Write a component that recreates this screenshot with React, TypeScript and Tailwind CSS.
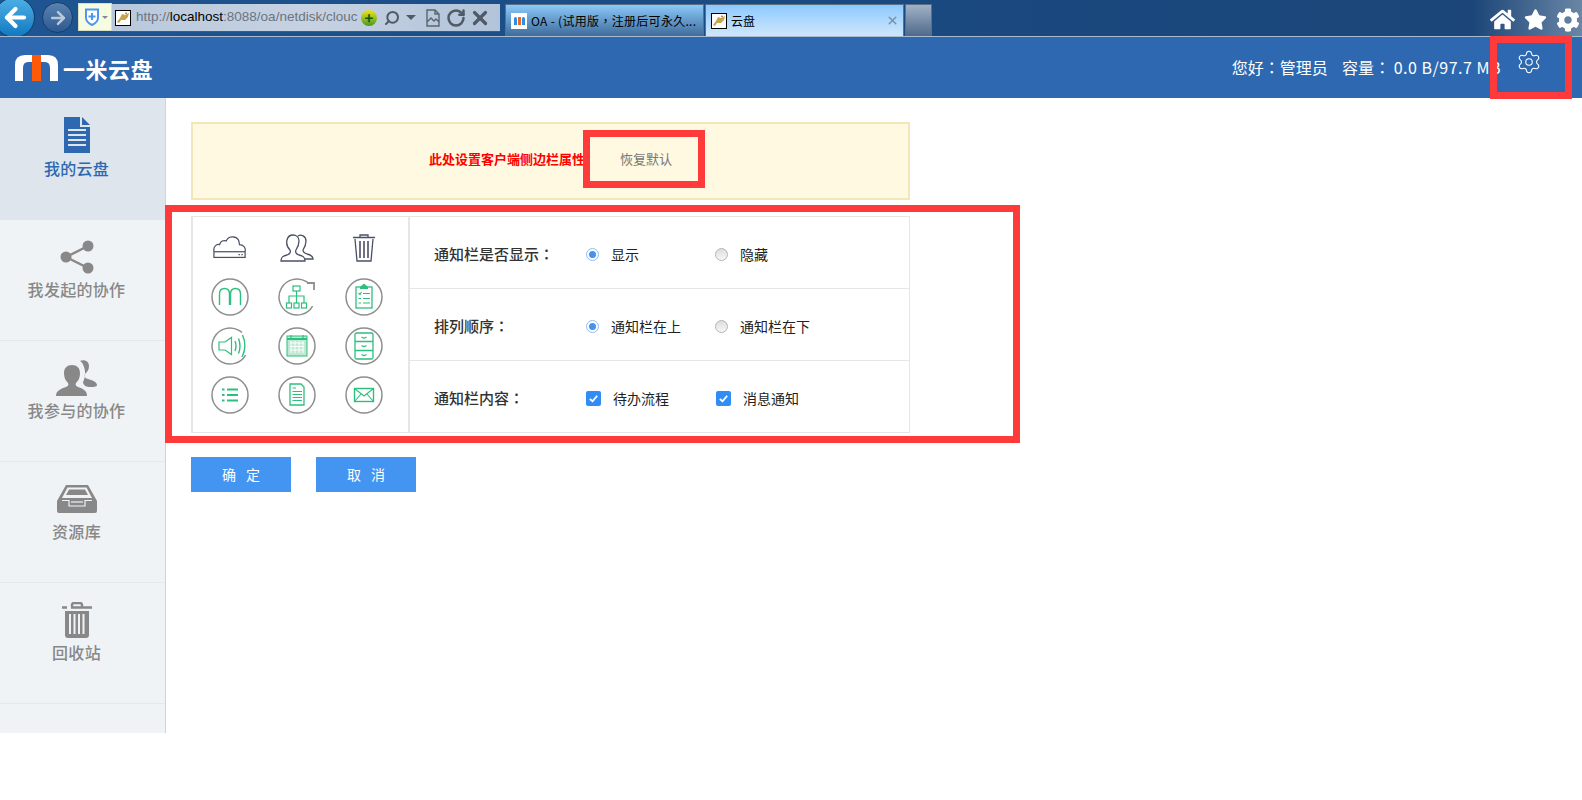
import { FaHome, FaStar, FaCog } from 'react-icons/fa';
import { Settings, Search, RotateCw, X, ArrowLeft, ArrowRight } from 'lucide-react';
import type { ReactNode } from 'react';

const TomcatIcon = () => (
  <span className="flex h-4 w-4 shrink-0 items-center justify-center border border-black bg-white">
    <svg viewBox="0 0 14 14" className="h-[14px] w-[14px]">
      <path d="M1 11 L4 7 L6 3 L9 4 L13 2 L12 6 L9 9 L5 9 L3 12 Z" fill="#c9a24e" />
      <path d="M9 3 L10 1 L11 3 Z" fill="#8a6b2a" />
    </svg>
  </span>
);

// full-width punctuation sits centred in the TC cut, as in the reference
const Colon = () => <span className="[font-family:'Noto_Sans_CJK_TC',sans-serif]">：</span>;
const Comma = () => <span className="[font-family:'Noto_Sans_CJK_TC',sans-serif]">，</span>;

const ChromeBar = () => (
  <div className="relative flex h-[37px] items-start overflow-hidden border-b border-[#a9bccf] bg-gradient-to-r from-[#1e5592] via-[#1a4a82] to-[#1b4577]">
    <div className="absolute right-0 top-0 h-[36px] w-[110px] bg-gradient-to-r from-transparent to-[#6a86a6]" />
    {/* back / forward */}
    <div className="ml-[-6px] mt-[-3px] flex h-[41px] w-[41px] shrink-0 items-center justify-center rounded-full border border-[#123a66] bg-gradient-to-b from-[#4cb0e6] to-[#0d78c0]">
      <ArrowLeft size={29} color="#ffffff" strokeWidth={3.5} className="ml-[2px]" />
    </div>
    <div className="ml-[7px] mt-[2px] flex h-[31px] w-[31px] shrink-0 items-center justify-center rounded-full border border-[#1a3e68] bg-gradient-to-b from-[#5a82ae] to-[#2c5a92]">
      <ArrowRight size={20} color="#b9c8da" strokeWidth={3} />
    </div>
    {/* address bar */}
    <div className="ml-[5px] mt-[3px] flex h-[28px] w-[34px] shrink-0 items-center gap-[1px] border border-[#d7dfc4] bg-[#f6fce2] pl-[5px]">
      <svg viewBox="0 0 16 18" className="h-[18px] w-[16px]">
        <path d="M2 1.5 H14 V10 C14 14 10 16 8 17 C6 16 2 14 2 10 Z" fill="#ffffff" stroke="#4d98ee" strokeWidth="2" />
        <path d="M8 5 V12 M4.5 8.5 H11.5" stroke="#4d98ee" strokeWidth="2" />
      </svg>
      <span className="ml-[1px] h-0 w-0 border-x-[3px] border-t-[3px] border-x-transparent border-t-[#888888]" />
    </div>
    <div className="mt-[4px] flex h-[28px] w-[388px] shrink-0 items-center border-b border-[#3c5d80] bg-gradient-to-r from-[#b8c8dc] via-[#c6d2e2] to-[#b2c4da] pl-[3px]">
      <TomcatIcon />
      <span className="ml-[5px] w-[221px] whitespace-nowrap text-[13.5px] text-[#6c7480] [font-family:'Liberation_Sans',sans-serif]">
        http://<span className="text-black">localhost</span>:8088/oa/netdisk/clouc
      </span>
      <span className="ml-[4px] flex h-4 w-4 shrink-0 items-center justify-center rounded-full bg-gradient-to-b from-[#f2e21c] to-[#3f9a1c] text-[15px] font-bold leading-none text-[#0c5a10]">+</span>
      <Search size={16} color="#505a66" strokeWidth={3} className="ml-[7px] -scale-x-100" />
      <span className="ml-[6px] h-0 w-0 border-x-[5px] border-t-[5px] border-x-transparent border-t-[#505a66]" />
      <svg viewBox="0 0 14 18" className="ml-[10px] h-[18px] w-[14px]" fill="none" stroke="#5a646f" strokeWidth="1.4">
        <path d="M1 1 H9 L13 5 V17 H1 Z M9 1 V5 H13 M1 13 L5 9 L8 12 L10 10 L13 13" />
      </svg>
      <RotateCw size={20} color="#505a66" strokeWidth={3} className="ml-[6px]" />
      <X size={22} color="#505a66" strokeWidth={3.5} className="ml-[3px]" />
    </div>
    {/* tabs */}
    <div className="ml-[5px] mt-[4px] flex h-[32px] w-[199px] shrink-0 items-center border border-b-0 border-[#5a7088] bg-gradient-to-b from-[#8ccaf9] to-[#3f6c9c] pl-[5px]">
      <span className="flex h-4 w-4 shrink-0 items-center justify-center gap-[1px] bg-white">
        <span className="h-[8px] w-[3px] rounded-t-sm bg-[#2b8fe6]" />
        <span className="h-[8px] w-[3px] bg-[#f26522]" />
        <span className="h-[8px] w-[3px] rounded-t-sm bg-[#2b8fe6]" />
      </span>
      <span className="ml-[4px] whitespace-pre text-[12px] leading-none tracking-[0.3px] text-black">
        OA - (试用版<Comma />注册后可永久...
      </span>
    </div>
    <div className="ml-[1px] mt-[4px] flex h-[32px] w-[199px] shrink-0 items-center border border-b-0 border-[#5a7088] bg-gradient-to-b from-[#8cc9fe] to-[#d0e6fb] pl-[5px]">
      <TomcatIcon />
      <span className="ml-[4px] text-[12px] leading-none text-black">云盘</span>
      <X size={13} color="#7f93a8" strokeWidth={3} className="ml-auto mr-[4px]" />
    </div>
    <div className="ml-[1px] mt-[4px] h-[32px] w-[27px] shrink-0 border border-b-0 border-[#5a7088] bg-gradient-to-b from-[#a2b2c6] to-[#4f6a8a]" />
    {/* right side */}
    <div className="relative ml-auto mr-[2px] mt-[7px] flex items-center gap-[9px]">
      <FaHome size={25} color="#ffffff" />
      <FaStar size={23} color="#ffffff" />
      <FaCog size={24} color="#ffffff" />
    </div>
  </div>
);

const TopHeader = () => (
  <header className="flex h-[61px] items-center bg-[#2d68b0] text-white">
    <div className="ml-[15px] flex items-center">
      <svg viewBox="0 0 43 26" className="h-[26px] w-[43px]">
        <path d="M0 26 V10 Q0 0 10 0 H17 V7 H13 Q8 7 8 13 V26 Z" fill="#ffffff" />
        <rect x="17" y="0" width="9" height="26" fill="#ff5a0a" />
        <path d="M26 0 H33 Q43 0 43 10 V26 H35 V13 Q35 7 30 7 H26 Z" fill="#ffffff" />
      </svg>
      <span className="ml-[5px] text-[22px] font-bold leading-none tracking-[0.5px]">一米云盘</span>
    </div>
    <div className="ml-auto mr-[81px] mt-[-1px] whitespace-pre text-[16px]">
      您好<Colon />管理员{'    '}容量<Colon /> <span className="tracking-[0.5px]">0.0 B/97.7 MB</span>
    </div>
  </header>
);

const DocIcon = () => (
  <svg viewBox="0 0 26 36" className="h-[36px] w-[26px]">
    <path d="M0 0 H16 V10 H26 V36 H0 Z" fill="#2d68b0" />
    <path d="M18 0 L26 8 H18 Z" fill="#2d68b0" />
    <path d="M4 13 H22 M4 18 H22 M4 23 H22 M4 28 H22" stroke="#dee5ed" strokeWidth="2" />
  </svg>
);
const ShareIcon = () => (
  <svg viewBox="0 0 34 34" className="h-[34px] w-[34px]">
    <path d="M6 17 L28 6 M6 17 L28 28" stroke="#888888" strokeWidth="2.5" />
    <circle cx="6" cy="17" r="5.5" fill="#888888" />
    <circle cx="28" cy="6" r="5.5" fill="#888888" />
    <circle cx="28" cy="28" r="5.5" fill="#888888" />
  </svg>
);
const UsersIcon = () => (
  <svg viewBox="0 0 42 36" className="h-[36px] w-[42px]">
    <path d="M0 36 C0 31 4 29 10 27 C12 26 13 25 12 23 C9 20 8 17 8 13 C8 8 11 5 16 5 C21 5 24 8 24 13 C24 17 23 20 20 23 C19 25 20 26 22 27 C28 29 31 31 31 36 Z" fill="#888888" />
    <path d="M24 1 C28 -1 33 1 33 6 C33 10 31 12 29 14 C28 17 29 18 32 19 C36 20 41 22 41 25 C41 27 37 27 33 27 C29 27 27 24 27 22 C29 19 30 12 28 7 C27 4 26 2 24 1 Z" fill="#888888" />
  </svg>
);
const InboxIcon = () => (
  <svg viewBox="0 0 40 28" className="h-[28px] w-[40px]">
    <path d="M9 0 H31 L40 16 V26 Q40 28 38 28 H2 Q0 28 0 26 V16 Z" fill="#888888" />
    <path d="M10.5 2.5 H29.5 L35 13 H5 Z" fill="#eff3f6" />
    <path d="M12 4.5 H28 L31 10 H9 Z" fill="#888888" />
    <path d="M5 15.5 H12 V21 H28 V15.5 H35" stroke="#eff3f6" strokeWidth="1.2" fill="none" />
    <path d="M14 17 H26" stroke="#eff3f6" strokeWidth="1.2" />
  </svg>
);
const TrashIcon = () => (
  <svg viewBox="0 0 30 36" className="h-[36px] w-[30px]">
    <path d="M0 5.5 H5 M9 5.5 H30" stroke="#888888" strokeWidth="2.5" />
    <path d="M10 5 V3 Q10 1 12 1 H18 Q20 1 20 3 V5" stroke="#888888" strokeWidth="2.4" fill="none" />
    <path d="M3 9 H27 V33 Q27 36 24 36 H6 Q3 36 3 33 Z" fill="#888888" />
    <path d="M7 12 V32 M11.5 12 V32 M16 12 V32 M20.5 12 V32" stroke="#eff3f6" strokeWidth="2" transform="translate(1 0)" />
  </svg>
);

const NavItem = ({ icon, label, active }: { icon: ReactNode; label: string; active?: boolean }) => (
  <div className={active ? 'flex h-[122px] flex-col items-center bg-[#dee5ed] pr-[12px] pt-[19px]' : 'flex h-[121px] flex-col items-center border-b border-[#e3e9ef] pr-[12px] pt-[19px]'}>
    <div className="flex h-[36px] items-center justify-center">{icon}</div>
    <div className={active ? 'mt-[3px] text-[16px] font-medium leading-[24px] tracking-[0.3px] text-[#2d68b0]' : 'mt-[2px] text-[16px] font-medium leading-[24px] tracking-[0.3px] text-[#888888]'}>
      {label}
    </div>
  </div>
);

const Sidebar = () => (
  <aside className="h-[635px] w-[166px] shrink-0 border-r border-[#c8d5e2] bg-[#eff3f6]">
    <NavItem active icon={<DocIcon />} label="我的云盘" />
    <NavItem icon={<ShareIcon />} label="我发起的协作" />
    <NavItem icon={<UsersIcon />} label="我参与的协作" />
    <NavItem icon={<InboxIcon />} label="资源库" />
    <NavItem icon={<TrashIcon />} label="回收站" />
  </aside>
);

const Ring = ({ children, gap }: { children: ReactNode; gap?: boolean }) => (
  <svg viewBox="0 0 40 40" className="h-[40px] w-[40px]" fill="none">
    <circle
      cx="20"
      cy="20"
      r="18"
      stroke="#8e8e8e"
      strokeWidth="1.5"
      strokeDasharray={gap ? '88 25' : undefined}
      transform={gap ? 'rotate(30 20 20)' : undefined}
    />
    {children}
  </svg>
);

const green = '#2dbf7d';

const sideIcons: ReactNode[] = [
  <svg key="cloud" viewBox="0 0 36 28" className="h-[27px] w-[34px]" fill="none" stroke="#4b5064" strokeWidth="1.3">
    <path d="M1 18 C0 13 4 10 7 11 C8 7 11 6 14 7 C16 2 24 1 27 6 C28 9 28 10 28 11 C32 11 35 14 34 18" />
    <rect x="1" y="18.5" width="33" height="6" />
    <path d="M27 21.5 H28.5 M30 21.5 H31.5" />
  </svg>,
  <svg key="users" viewBox="0 0 34 28" className="h-[28px] w-[34px]" fill="none" stroke="#4b5064" strokeWidth="1.3">
    <path d="M1 27 C1 23 3 22 7 21 C10 20 11 18 10 16 C7 13 6 10 7 6 C8 2 11 1 13 1 C16 1 19 3 19 7 C19 10 18 13 16 16 C15 18 16 20 19 21 C23 22 25 23 25 27 Z" />
    <path d="M18 2 C21 0 26 2 26 7 C26 10 25 13 23 16 C23 18 24 19 27 20 C31 21 33 22 33 25 H25" />
  </svg>,
  <svg key="trash" viewBox="0 0 24 28" className="h-[28px] w-[24px]" fill="none" stroke="#4b5064" strokeWidth="1.3">
    <path d="M1 3.5 H23 M8 3 V1 H16 V3 M3 5 L5 27 H19 L21 5" />
    <path d="M8 7 V24 M12 7 V24 M16 7 V24" strokeWidth="1.6" />
  </svg>,
  <Ring key="m">
    <path d="M9.5 28 V17 Q9.5 11.5 14.5 11.5 Q19.5 11.5 19.5 17 V28 M20.5 28 V17 Q20.5 11.5 25.5 11.5 Q30.5 11.5 30.5 17 V28" stroke={green} strokeWidth="1.4" />
  </Ring>,
  <Ring key="org" gap>
    <path d="M30 6 H37 V13" stroke="#8e8e8e" strokeWidth="1.8" />
    <rect x="16" y="9" width="7" height="5" stroke={green} strokeWidth="1.2" />
    <path d="M19.5 14 V22 M12 26 V19 H27 V26 M19.5 22 V26" stroke={green} strokeWidth="1.2" />
    <rect x="9.5" y="26" width="5" height="5" stroke={green} strokeWidth="1.2" />
    <rect x="17" y="26" width="5" height="5" stroke={green} strokeWidth="1.2" />
    <rect x="24.5" y="26" width="5" height="5" stroke={green} strokeWidth="1.2" />
  </Ring>,
  <Ring key="task">
    <rect x="12" y="10" width="16" height="21" stroke={green} strokeWidth="1.3" />
    <path d="M16 10 L20 6.5 L24 10 V12 H16 Z" fill={green} />
    <path d="M14.5 16 L16 17.5 L17.5 15 M14.5 21.5 H17 M14.5 26 H17 M19 16.5 H26 M19 21.5 H26 M19 26 H26" stroke={green} strokeWidth="1.1" />
  </Ring>,
  <Ring key="sound" gap>
    <path d="M9 16 H15 L21.5 11.5 V28.5 L15 24 H9 Z" stroke={green} strokeWidth="1.2" />
    <path d="M25 15 Q27 20 25 25 M28.5 12.5 Q31.5 20 28.5 27.5 M32.5 9 Q37.5 20 32 31" stroke={green} strokeWidth="1.4" />
  </Ring>,
  <Ring key="cal">
    <rect x="10" y="10" width="20" height="20" fill="#bfe9d4" stroke={green} strokeWidth="1" />
    <path d="M10 13 H30" stroke={green} strokeWidth="2" />
    <path d="M14 9 V12 M26 9 V12" stroke={green} strokeWidth="1.2" />
    <path d="M13 17 H27 M13 20.5 H27 M13 24 H27 M14 15 V27 M18 15 V27 M22 15 V27 M26 15 V27" stroke="#ffffff" strokeWidth="0.9" />
  </Ring>,
  <Ring key="cabinet">
    <rect x="11" y="7" width="18" height="26" rx="1.5" stroke={green} strokeWidth="1.3" />
    <path d="M11 15.5 H29 M11 24.5 H29" stroke={green} strokeWidth="1.3" />
    <path d="M17.5 11 Q20 13 22.5 11 M17.5 19.5 Q20 21.5 22.5 19.5 M17.5 28.5 Q20 30.5 22.5 28.5" stroke={green} strokeWidth="1.3" />
  </Ring>,
  <Ring key="list">
    <path d="M12 14.5 H14.5 M12 20 H14.5 M12 25.5 H14.5 M17 14.5 H28 M17 20 H28 M17 25.5 H28" stroke={green} strokeWidth="2.2" />
  </Ring>,
  <Ring key="doc">
    <path d="M13 9 H24 L27 12 V30 H13 Z" stroke={green} strokeWidth="1.3" />
    <path d="M15.5 13 H19 M15.5 16.5 H25 M15.5 19.5 H25 M15.5 22.5 H25 M15.5 25.5 H25" stroke={green} strokeWidth="1.1" />
  </Ring>,
  <Ring key="mail">
    <rect x="10.5" y="13.5" width="19" height="13" stroke={green} strokeWidth="1.4" />
    <path d="M10.5 13.5 L20 21 L29.5 13.5 M10.5 26.5 L17 19 M29.5 26.5 L23 19" stroke={green} strokeWidth="1.1" />
  </Ring>,
];

const Radio = ({ checked }: { checked?: boolean }) =>
  checked ? (
    <span className="flex h-[13px] w-[13px] shrink-0 items-center justify-center rounded-full border border-[#8fbdf5] bg-white">
      <span className="h-[7px] w-[7px] rounded-full bg-[#4593f0]" />
    </span>
  ) : (
    <span className="h-[13px] w-[13px] shrink-0 rounded-full border border-[#b5b5b5] bg-gradient-to-b from-[#dddddd] to-[#f7f7f7]" />
  );

const Check = () => (
  <span className="flex h-[15px] w-[15px] shrink-0 items-center justify-center rounded-[2px] bg-[#2f8df5]">
    <svg viewBox="0 0 12 12" className="h-[11px] w-[11px]" fill="none" stroke="#ffffff" strokeWidth="2">
      <path d="M2 6.5 L5 9 L10 3" />
    </svg>
  </span>
);

const Option = ({ mark, label, width, gap }: { mark: ReactNode; label: string; width: string; gap: string }) => (
  <div className={`flex items-center ${width} ${gap}`}>
    {mark}
    <span className="text-[14px] text-[#222222]">{label}</span>
  </div>
);

const FormRow = ({ label, children, last }: { label: string; children: ReactNode; last?: boolean }) => (
  <div className={last ? 'flex h-[71px] items-center pt-[3px]' : 'flex h-[72px] items-center border-b border-[#e6e6e6] pt-[3px]'}>
    <div className="w-[176px] shrink-0 pl-[24px] text-[15px] font-medium text-[#333333]">
      {label}
      <Colon />
    </div>
    <div className="flex items-center">{children}</div>
  </div>
);

const SettingsPanel = () => (
  <div className="flex h-[217px] w-[719px] border border-l-2 border-[#e6e6e6]">
    <div className="grid w-[217px] shrink-0 grid-cols-[repeat(3,67px)] auto-rows-[49px] place-items-center border-r-2 border-[#e6e6e6] pl-[3px] pt-[6px]">
      {sideIcons}
    </div>
    <div className="flex-1">
      <FormRow label="通知栏是否显示">
        <Option mark={<Radio checked />} label="显示" width="w-[129px]" gap="gap-[12px]" />
        <Option mark={<Radio />} label="隐藏" width="w-[129px]" gap="gap-[12px]" />
      </FormRow>
      <FormRow label="排列顺序">
        <Option mark={<Radio checked />} label="通知栏在上" width="w-[129px]" gap="gap-[12px]" />
        <Option mark={<Radio />} label="通知栏在下" width="w-[129px]" gap="gap-[12px]" />
      </FormRow>
      <FormRow label="通知栏内容" last>
        <Option mark={<Check />} label="待办流程" width="w-[130px]" gap="gap-[12px]" />
        <Option mark={<Check />} label="消息通知" width="w-[130px]" gap="gap-[12px]" />
      </FormRow>
    </div>
  </div>
);

const App = () => {
  return (
    <div className="relative h-[800px] w-[1582px] overflow-hidden bg-white [font-family:'Noto_Sans_CJK_SC','Liberation_Sans',sans-serif]">
      <ChromeBar />
      <TopHeader />
      <div className="flex">
        <Sidebar />
        <main className="pl-[25px] pt-[24px]">
          <div className="flex h-[78px] w-[719px] items-center border-2 border-[#f2e7b8] bg-[#fff9e1] pb-[4px] pl-[236px]">
            <span className="text-[13px] font-bold text-[#ff0000]">此处设置客户端侧边栏属性</span>
            <span className="ml-[35px] text-[13px] text-[#777777]">恢复默认</span>
          </div>
          <div className="mt-[16px]">
            <SettingsPanel />
          </div>
          <div className="mt-[24px] flex gap-[25px]">
            <button className="h-[35px] w-[100px] bg-[#4494f2] text-[14px] text-white [word-spacing:7px]">确 定</button>
            <button className="h-[35px] w-[100px] bg-[#4494f2] text-[14px] text-white [word-spacing:7px]">取 消</button>
          </div>
        </main>
      </div>

      {/* red annotation boxes over the page */}
      <div className="absolute left-[1490px] top-[36px] h-[63px] w-[82px] border-[7px] border-[#ff3a3a]" />
      <div className="absolute left-[583px] top-[130px] h-[58px] w-[122px] border-[7px] border-[#ff3a3a]" />
      <div className="absolute left-[165px] top-[205px] h-[238px] w-[855px] border-[7px] border-[#ff3a3a]" />
      <Settings className="absolute left-[1516px] top-[49px]" size={26} color="#ffffff" strokeWidth={1} />
    </div>
  );
};

export default App;
